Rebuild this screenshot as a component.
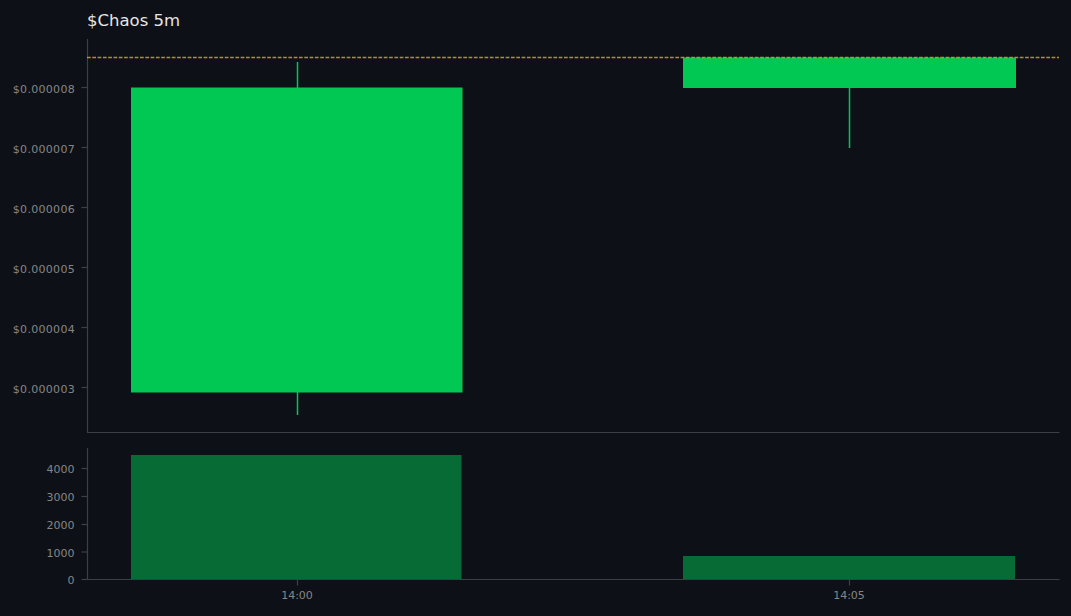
const FONT = "font-['DejaVu_Sans','Liberation_Sans',sans-serif]";

const priceTicks = [
  { label: '$0.000008', y: 88 },
  { label: '$0.000007', y: 148 },
  { label: '$0.000006', y: 208 },
  { label: '$0.000005', y: 268 },
  { label: '$0.000004', y: 328 },
  { label: '$0.000003', y: 388 },
];

const volumeTicks = [
  { label: '4000', y: 29 },
  { label: '3000', y: 57 },
  { label: '2000', y: 85 },
  { label: '1000', y: 112.5 },
  { label: '0', y: 140 },
];

const timeTicks = [
  { label: '14:00', x: 297.5 },
  { label: '14:05', x: 849.5 },
];

const AXIS = '#3c3f43';
const LABEL = '#858585';
const GREEN = '#00c853';
const GREEN_DIM = '#066b35';

function PriceChart() {
  // svg origin sits at page y=0 offset by the title row (36px)
  const oy = 36;
  return (
    <svg width={1071} height={404} viewBox={`0 ${oy} 1071 404`} className="block">
      <line x1={87.5} y1={39} x2={87.5} y2={432.5} stroke={AXIS} strokeWidth={1.2} />
      <line x1={87} y1={432.5} x2={1059.5} y2={432.5} stroke={AXIS} strokeWidth={1.2} />
      {priceTicks.map(t => (
        <g key={t.label}>
          <line x1={81.5} y1={t.y - 0.5} x2={87} y2={t.y - 0.5} stroke={AXIS} strokeWidth={1.2} />
          <text x={75} y={t.y + 4.5} textAnchor="end" fontSize={11} letterSpacing={0.3} fill={LABEL}>{t.label}</text>
        </g>
      ))}
      <rect x={296.75} y={62} width={1.5} height={353} fill={GREEN} />
      <rect x={131} y={87.5} width={331.5} height={305} fill={GREEN} />
      <rect x={848.75} y={88} width={1.5} height={60} fill={GREEN} />
      <rect x={683} y={57.5} width={333} height={30.5} fill={GREEN} />
      <line x1={87} y1={57.5} x2={1059} y2={57.5} stroke="#d9a520" strokeOpacity={0.85} strokeWidth={1.3} strokeDasharray="3.7 1.6" />
    </svg>
  );
}

function VolumeChart() {
  return (
    <svg width={1071} height={176} viewBox="0 0 1071 176" className="block">
      <line x1={87.5} y1={8} x2={87.5} y2={139.5} stroke={AXIS} strokeWidth={1.2} />
      <line x1={87} y1={139.5} x2={1059.5} y2={139.5} stroke={AXIS} strokeWidth={1.2} />
      <rect x={131} y={15} width={330.5} height={124} fill={GREEN_DIM} />
      <rect x={683} y={116} width={332} height={23} fill={GREEN_DIM} />
      {volumeTicks.map(t => (
        <g key={t.label}>
          <line x1={81.5} y1={t.y - 0.5} x2={87} y2={t.y - 0.5} stroke={AXIS} strokeWidth={1.2} />
          <text x={74.5} y={t.y + 4} textAnchor="end" fontSize={11} fill={LABEL}>{t.label}</text>
        </g>
      ))}
      {timeTicks.map(t => (
        <g key={t.label}>
          <line x1={t.x} y1={140} x2={t.x} y2={145.5} stroke={AXIS} strokeWidth={1.2} />
          <text x={t.x - 0.5} y={158.5} textAnchor="middle" fontSize={11} fill={LABEL}>{t.label}</text>
        </g>
      ))}
    </svg>
  );
}

export default function App() {
  return (
    <div className={`w-[1071px] h-[616px] overflow-hidden bg-[#0d1117] ${FONT}`}>
      {/* Title */}
      <div className="h-[36px] pl-[87px] pt-[11px] text-[16.5px] leading-[20px] text-[#e6e6e6]">$Chaos 5m</div>
      <PriceChart />
      <VolumeChart />
    </div>
  );
}
